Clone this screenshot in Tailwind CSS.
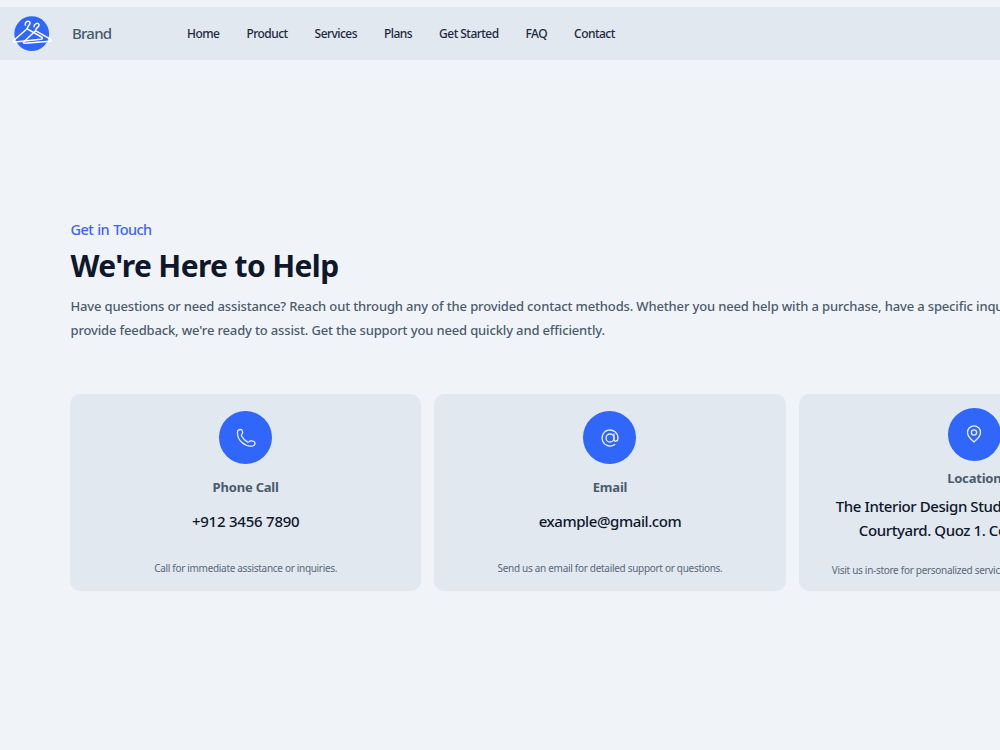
<!DOCTYPE html>
<html lang="en">
<head>
  <meta charset="UTF-8" />
  <meta name="viewport" content="width=device-width, initial-scale=1.0"/>
  <title>Brand — Contact</title>
  <script src="https://cdn.jsdelivr.net/npm/@tailwindcss/browser@4"></script>
</head>
<body class="bg-[#f0f4f9] h-screen overflow-hidden font-['Noto_Sans',sans-serif] whitespace-nowrap">
  <header class="mt-[7px] h-[53px] bg-[#e1e8f0] flex items-center">
    <svg class="ml-3 w-10 h-9 shrink-0" viewBox="0 0 40 36" fill="none">
      <circle cx="19.7" cy="17.7" r="17.4" fill="#3166fb"/>
      <g stroke="#fff" stroke-width="1.5" stroke-linecap="round" stroke-linejoin="round">
        <path d="M13.3 9C12.800 6 16 4.200 17.700 6c1.700 2.200-2.300 3.500-2.500 6.800L29.500 21c1.600 1 1 2-.5 2.200L3 26c-1.800.1-2.200-1-.8-2L15.200 12.800"/>
        <path d="M22 10.700c0-3 4-4.500 5-2.200.8 2.500-3.500 3-3.500 6.200L12.200 25.500c-1.300 1.300-.7 1.900.8 1.800L38 25.200c1.700-.2 1.600-1.300.3-2L23.500 14.700"/>
      </g>
    </svg>
    <span class="ml-5 w-[115px] text-[15px] tracking-[-0.75px] font-medium text-[#475a6c]">Brand</span>
    <nav class="flex gap-[27px] text-xs tracking-[-0.54px] font-medium text-[#1d293d]">
      <a>Home</a>
      <a>Product</a>
      <a>Services</a>
      <a>Plans</a>
      <a>Get Started</a>
      <a>FAQ</a>
      <a>Contact</a>
    </nav>
  </header>

  <main class="ml-[70px] mt-[157px] w-[1080px]">
    <p class="h-6 leading-6 pl-[0.5px] text-[14.5px] tracking-[-0.6px] [word-spacing:1px] font-medium text-[#3d65f6]">Get in Touch</p>
    <h1 class="mt-px h-12 leading-[48px] pl-[0.5px] text-[30px] tracking-[-0.63px] font-bold text-[#0f172b]">We're Here to Help</h1>
    <p class="mt-[5px] pl-[0.5px] text-[13px] leading-[23.5px] tracking-[-0.15px] font-medium text-[#4b5b6c]">Have questions or need assistance? Reach out through any of the provided contact methods. Whether you need help with a purchase, have a specific inquiry, or want to<br>provide feedback, we're ready to assist. Get the support you need quickly and efficiently.</p>

    <section class="mt-[52.4px] grid grid-cols-3 gap-[13px] text-center">
      <article class="h-[197px] pt-[17px] rounded-[10px] bg-[#e1e8f0] flex flex-col items-center">
        <div class="size-[53px] shrink-0 rounded-full bg-[#3166fb] flex items-center justify-center">
          <svg class="size-5" viewBox="0 0 20 20" fill="none" stroke="#e8efff" stroke-width="1.3" stroke-linejoin="round">
            <path d="M2.200 2.200c1.300-1.100 3.600-.9 4.100.5.500 1.300.6 2.700-.4 3.500-.7.600-.6 1.300-.2 2 1.400 2.500 3.200 4.300 5.600 5.700.7.400 1.300.3 1.800-.3.800-1.200 4.300-.9 5.400.3 1 1.200.2 3.500-1.500 4-8.200 1.500-16-6-15.500-13.500 0-.9.200-1.700.7-2.200Z"/>
          </svg>
        </div>
        <h2 class="mt-[11px] h-6 leading-6 text-[13px] tracking-[-0.2px] font-bold text-[#4b5b6c]">Phone Call</h2>
        <p class="mt-[10px] h-6 leading-6 text-[15px] tracking-[-0.23px] font-medium text-[#0f172b]">+912 3456 7890</p>
        <p class="mt-[25px] h-5 leading-5 text-[10px] tracking-[-0.31px] text-[#5a6878]">Call for immediate assistance or inquiries.</p>
      </article>

      <article class="h-[197px] pt-[17px] rounded-[10px] bg-[#e1e8f0] flex flex-col items-center">
        <div class="size-[53px] shrink-0 rounded-full bg-[#3166fb] flex items-center justify-center">
          <svg class="size-5" viewBox="0 0 20 20" fill="none" stroke="#e8efff" stroke-width="1.3" stroke-linecap="round">
            <circle cx="10" cy="10" r="4"/>
            <path d="M14 6v5.500c0 2.500 4 2.500 4-1.500a8 8 0 1 0-3.200 6.400"/>
          </svg>
        </div>
        <h2 class="mt-[11px] h-6 leading-6 text-[13px] tracking-[-0.2px] font-bold text-[#4b5b6c]">Email</h2>
        <p class="mt-[10px] h-6 leading-6 text-[15px] tracking-[-0.41px] font-medium text-[#0f172b]">example@gmail.com</p>
        <p class="mt-[25px] h-5 leading-5 text-[10px] tracking-[-0.3px] text-[#5a6878]">Send us an email for detailed support or questions.</p>
      </article>

      <article class="h-[197px] pt-[13.5px] rounded-[10px] bg-[#e1e8f0] flex flex-col items-center">
        <div class="size-[53px] shrink-0 rounded-full bg-[#3166fb] flex items-center justify-center">
          <svg class="size-5" viewBox="0 0 20 20" fill="none" stroke="#e8efff" stroke-width="1.3" stroke-linejoin="round">
            <circle cx="10" cy="8.500" r="2.600"/>
            <path d="M10 18c-1.500-1.500-6.500-5-6.500-9.600a6.500 6.500 0 0 1 13 0C16.500 13 11.500 16.500 10 18Z"/>
          </svg>
        </div>
        <h2 class="mt-[5px] h-6 leading-6 text-[13px] tracking-[-0.2px] font-bold text-[#4b5b6c]">Location</h2>
        <p class="mt-[5.5px] w-[277px] text-left leading-[23.5px] text-[15px] tracking-[-0.41px] font-medium text-[#0f172b]">The Interior Design Studio. Unit 12, The<br><span class="pl-[23px]">Courtyard. Quoz 1. Corner 4b &amp; 6th</span></p>
        <p class="mt-[18px] w-[285px] text-left h-5 leading-5 text-[10px] tracking-[-0.3px] text-[#5a6878]">Visit us in-store for personalized service and expert product advice.</p>
      </article>
    </section>
  </main>
</body>
</html>
